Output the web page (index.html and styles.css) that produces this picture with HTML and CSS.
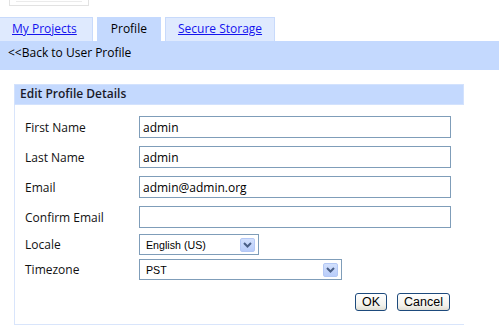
FILE: index.html
```html
<!DOCTYPE html>
<html lang="en">
<head>
    <meta charset="UTF-8">
    <title>Profile</title>
    <link rel="stylesheet" href="styles.css">
</head>
<body>
    <div class="logo"><div class="logo-inner"></div></div>

    <ul class="tabs">
        <li class="tab tab-first"><a href="#">My Projects</a></li>
        <li class="tab active">Profile</li>
        <li class="tab"><a href="#">Secure Storage</a></li>
    </ul>
    <div class="subnav">&lt;&lt;Back to User Profile</div>

    <form class="panel">
        <div class="panel-title">Edit Profile Details</div>
        <div class="panel-body">
            <div class="row">
                <label for="first">First Name</label>
                <input class="text" id="first" type="text" value="admin">
            </div>
            <div class="row">
                <label for="last">Last Name</label>
                <input class="text" id="last" type="text" value="admin">
            </div>
            <div class="row">
                <label for="email">Email</label>
                <input class="text" id="email" type="text" value="admin@admin.org">
            </div>
            <div class="row">
                <label for="confirm">Confirm Email</label>
                <input class="text" id="confirm" type="text" value="">
            </div>
            <div class="row row-locale">
                <label>Locale</label>
                <div class="select select-locale">
                    <span class="select-value">English (US)</span>
                    <span class="select-arrow">
                        <svg width="9" height="6" viewBox="0 0 9 6"><path d="M1 1 L4.5 4.5 L8 1" fill="none" stroke="#4a5f86" stroke-width="2"/></svg>
                    </span>
                </div>
            </div>
            <div class="row row-tz">
                <label>Timezone</label>
                <div class="select select-tz">
                    <span class="select-value">PST</span>
                    <span class="select-arrow">
                        <svg width="9" height="6" viewBox="0 0 9 6"><path d="M1 1 L4.5 4.5 L8 1" fill="none" stroke="#4a5f86" stroke-width="2"/></svg>
                    </span>
                </div>
            </div>
            <div class="actions">
                <button type="button" class="btn">OK</button>
                <button type="button" class="btn">Cancel</button>
            </div>
        </div>
    </form>
</body>
</html>
```

FILE: styles.css
```css
body {
    margin: 0;
    font-family: 'Open Sans', 'DejaVu Sans', sans-serif;
    font-size: 12px;
    color: #111;
    background-color: white;
}
.logo {
    margin-left: 9px;
    width: 80px;
    height: 6px;
    border: 1px solid #e2e2e2;
    border-top: none;
    box-sizing: border-box;
}
.logo-inner {
    margin: 0 6px;
    height: 1px;
    border-bottom: 1px solid #ebebeb;
}
.tabs {
    list-style: none;
    margin: 11px 0 0 0;
    padding: 0;
    display: flex;
    gap: 4px;
    height: 24px;
}
.tab {
    box-sizing: border-box;
    height: 24px;
    line-height: 21px;
    padding: 0 12px;
    font-size: 12px;
    background-color: #dfeafe;
    border: 1px solid #c8dafb;
    border-bottom: none;
    text-align: center;
}
.tab-first {
    border-left: none;
    padding: 0 15px 0 12px;
}
.tab a {
    color: #1414ee;
    text-decoration: underline;
}
.tab.active {
    background-color: #c4d9fe;
    border-color: #c4d9fe;
    color: #000;
    padding: 0 13px;
}
.subnav {
    height: 29px;
    box-sizing: border-box;
    line-height: 23px;
    padding-left: 8px;
    background-color: #c4d9fe;
    color: #000;
}
.panel {
    margin: 14px 0 0 14px;
    width: 450px;
}
.panel-title {
    height: 21px;
    box-sizing: border-box;
    line-height: 18px;
    padding-left: 5px;
    background-color: #c4d9fe;
    border: 1px solid #d3e2fd;
    font-weight: 600;
    color: #1a1a2a;
}
.panel-body {
    border-left: 1px solid #d9e5fb;
    border-bottom: 1px solid #d9e5fb;
    padding: 11px 0 13px 10px;
}
.row {
    display: flex;
    align-items: center;
    margin-bottom: 8px;
}
.row-locale {
    margin-top: -2px;
    margin-bottom: 4px;
}
.row-tz {
    margin-bottom: 13px;
}
.row label {
    width: 114px;
    color: #111;
}
.text {
    box-sizing: border-box;
    width: 312px;
    height: 22px;
    margin: 0;
    padding: 0 3px;
    border: 1px solid #7f9db9;
    font-family: 'Open Sans', 'DejaVu Sans', sans-serif;
    font-size: 12px;
    color: #000;
    background: white;
}
.select {
    box-sizing: border-box;
    height: 21px;
    display: flex;
    align-items: center;
    justify-content: space-between;
    border: 1px solid #7f9db9;
    padding: 0 3px 0 6px;
    font-family: 'Liberation Sans', Arial, sans-serif;
    font-size: 8pt;
    color: #000;
    background: white;
}
.select-locale {
    width: 120px;
}
.select-tz {
    width: 203px;
}
.select-arrow {
    box-sizing: border-box;
    width: 15px;
    height: 14px;
    margin-top: 1px;
    display: flex;
    align-items: center;
    justify-content: center;
    background: linear-gradient(#d2e0fd, #b9cdfa);
    border: 1px solid #b4c8f5;
    border-radius: 2px;
}
.actions {
    display: flex;
    justify-content: flex-end;
    gap: 10px;
    width: 425px;
}
.btn {
    box-sizing: border-box;
    height: 18px;
    padding: 0 6px;
    margin: 0;
    border: 1px solid #1d4a7c;
    border-radius: 3px;
    background: linear-gradient(#ffffff, #f3f2ec 70%, #e0ded3);
    font-family: 'Liberation Sans', Arial, sans-serif;
    font-size: 12.5px;
    line-height: 15px;
    color: #000;
}
```
